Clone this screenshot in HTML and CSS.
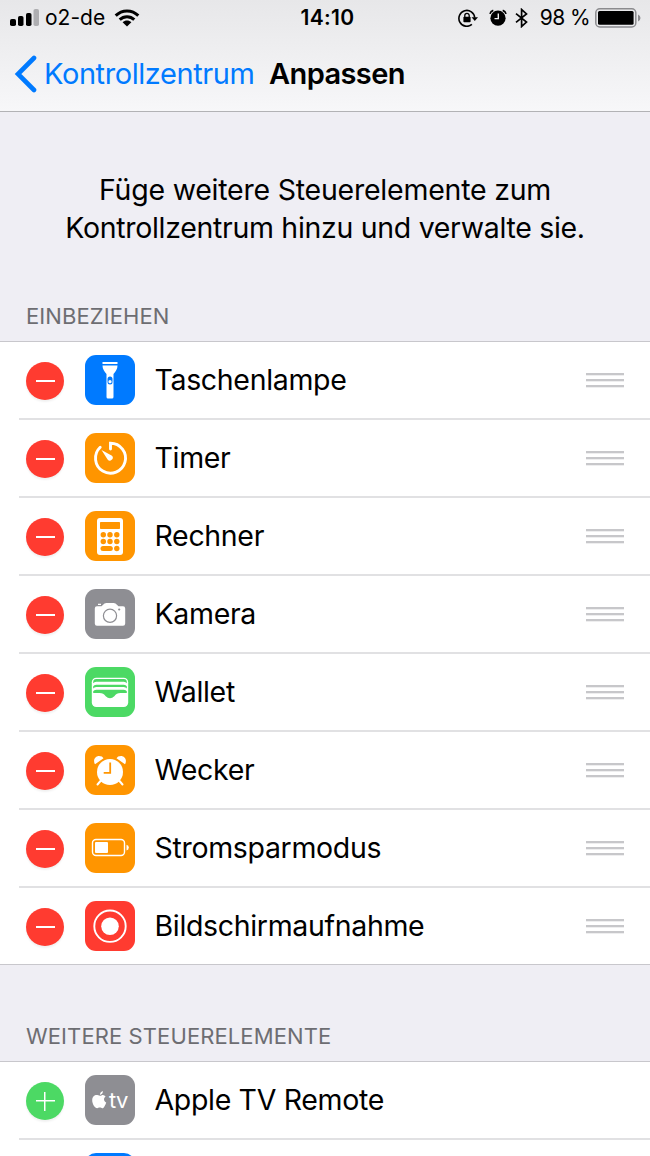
FILE: index.html
```
<!DOCTYPE html>
<html lang="de">
<head>
<meta charset="utf-8">
<title>Anpassen</title>
<link rel="stylesheet" href="styles.css">
</head>
<body>
<div class="screen">
  <header class="top">
    <div class="status">
      <div class="status-left">
        <svg class="signal" width="29" height="18" viewBox="0 0 29 18"><rect x="0" y="10" width="6" height="7" rx="1.8"/><rect x="8" y="7" width="5.5" height="10" rx="1.8"/><rect x="16" y="4" width="5.5" height="13" rx="1.8"/><rect x="23.5" y="0" width="5.5" height="17" rx="1.8" fill="#aeaeb1"/></svg>
        <span class="carrier">o2-de</span>
        <svg class="wifi" width="26" height="18" viewBox="0 0 26 18"><g fill="none" stroke="#000" stroke-width="3"><path d="M1.7 6.6C8 .3 18 .3 24.3 6.6"/><path d="M5.7 10.7C9.9 6.700 16.100 6.700 20.300 10.700"/></g><path d="M8.600 13.200C11.200 10.900 14.800 10.900 17.400 13.200L13 17.500Z"/></svg>
      </div>
      <span class="clock">14:10</span>
      <div class="status-right">
        <svg class="lock" width="20" height="18" viewBox="0 0 20 18"><path d="M13.900 15.400A7.900 7.900 0 1 1 16.700 8.800" fill="none" stroke="#000" stroke-width="1.600"/><path d="M13.500 8.200H20L16.800 12Z"/><rect x="5.400" y="7.800" width="7.200" height="5.500" rx=".8"/><path d="M6.800 8V6.500a2.200 2.200 0 0 1 4.400 0V8" fill="none" stroke="#000" stroke-width="1.300"/></svg>
        <svg class="alarm" width="18" height="18" viewBox="0 0 18 18"><circle cx="9" cy="9.200" r="7.600"/><path d="M1 4.900Q1.600 2.200 4.300 1.400M13.700 1.400Q16.400 2.200 17 4.900" fill="none" stroke="#000" stroke-width="1.700"/><path d="M9.300 4.500V9.600H5.500" fill="none" stroke="#f0f0f2" stroke-width="1.400"/></svg>
        <svg class="bluetooth" width="13" height="20" viewBox="0 0 13 20"><path d="M1 5.700L11.500 14.100 6.600 18.500V1.500L11.500 5.900 1 14.300" fill="none" stroke="#000" stroke-width="1.700"/></svg>
        <span class="percent">98 %</span>
        <svg class="battery" width="46" height="20" viewBox="0 0 46 20"><rect x=".8" y=".8" width="40" height="18.200" rx="4" fill="none" stroke="#8b8b8e" stroke-width="1.500"/><rect x="3" y="3" width="35.600" height="13.800" rx="1.500"/><path d="M43 6.500Q45.500 7.500 45.500 10T43 13.500Z" fill="#8b8b8e"/></svg>
      </div>
    </div>
    <nav class="nav">
      <svg class="back" width="23" height="38" viewBox="0 0 23 38"><path d="M20 3L4 19 20 35" fill="none" stroke="#007aff" stroke-width="4.600" stroke-linecap="round" stroke-linejoin="miter"/></svg>
      <a class="parent">Kontrollzentrum</a>
      <h1 class="title">Anpassen</h1>
    </nav>
  </header>
  <div class="intro"><p class="line-a">Füge weitere Steuerelemente zum</p><p class="line-b">Kontrollzentrum hinzu und verwalte sie.</p></div>
  <h2 class="heading">EINBEZIEHEN</h2>
  <ul class="list included">
    <li class="row"><i class="knob"></i>
      <svg class="tile blue" viewBox="0 0 50 50"><g fill="#fff"><rect x="17.500" y="7" width="15" height="2"/><path d="M17.500 10.500h15q0 4-4 8.500v23q0 1.500-1.500 1.500h-4q-1.500 0-1.500-1.500V19q-4-4.500-4-8.500z"/></g><rect x="22.500" y="21.500" width="5" height="8" rx="2.500" fill="#007aff"/><circle cx="25" cy="26.700" r="1.600" fill="#fff"/></svg>
      <span class="label">Taschenlampe</span><i class="grip"></i></li>
    <li class="row"><i class="knob"></i>
      <svg class="tile orange" viewBox="0 0 50 50"><path d="M15.200 14.300A15 15 0 1 0 25.500 10.200V16" fill="none" stroke="#fff" stroke-width="2.900" stroke-linecap="round"/><path d="M16.500 17L27 22.700A2.900 2.900 0 0 1 22.600 26.500Z" fill="#fff"/></svg>
      <span class="label">Timer</span><i class="grip"></i></li>
    <li class="row"><i class="knob"></i>
      <svg class="tile orange" viewBox="0 0 50 50"><rect x="12" y="7" width="26" height="37" rx="3" fill="#fff"/><g fill="#ff9500"><rect x="15" y="11" width="20" height="7" rx=".8"/><circle cx="18.300" cy="23.700" r="2.700"/><circle cx="25" cy="23.700" r="2.700"/><circle cx="31.800" cy="23.700" r="2.700"/><circle cx="18.300" cy="30.500" r="2.700"/><circle cx="25" cy="30.500" r="2.700"/><circle cx="31.800" cy="30.500" r="2.700"/><rect x="15.500" y="35" width="12.300" height="5" rx="2.500"/><circle cx="31.800" cy="37.500" r="2.700"/></g></svg>
      <span class="label">Rechner</span><i class="grip"></i></li>
    <li class="row"><i class="knob"></i>
      <svg class="tile gray" viewBox="0 0 50 50"><path d="M12 17.200h4.500l3-2.600q.7-.7 2-.7h7q1.300 0 2 .7l3 2.600H38q2.200 0 2.200 2.200v15.200q0 2.200-2.200 2.200H12q-2.200 0-2.200-2.200V19.400q0-2.200 2.200-2.200zM13 16v-1.300h3V16z" fill="#fff"/><circle cx="25" cy="26.800" r="6.600" fill="none" stroke="#8e8e93" stroke-width="1.200"/><circle cx="34.200" cy="20.500" r="1.100" fill="#8e8e93"/></svg>
      <span class="label">Kamera</span><i class="grip"></i></li>
    <li class="row"><i class="knob"></i>
      <svg class="tile green" viewBox="0 0 50 50"><rect x="6.800" y="10.700" width="36.400" height="29.300" rx="4.500" fill="#fff"/><g fill="#4cd964"><path d="M8.200 16.200V15q0-3 3-3h27.600q3 0 3 3v1.200Q40.800 14.700 38.800 14.700H11.200Q9.200 14.700 8.200 16.200z"/><path d="M8.200 21.500v-2.300Q9 17.700 11.200 17.700h27.600q2.200 0 3 1.500v2.300Q40.800 20 38.800 20H11.200Q9.200 20 8.200 21.500z"/><path d="M8.200 26v-1.800Q9 22.700 11.200 22.700h27.600q2.200 0 3 1.500V26h-6.300c-3 0-4.500 1-6.200 3.200q-2 2-4.300 2t-4.300-2C19 27 17.500 26 14.500 26z"/></g></svg>
      <span class="label">Wallet</span><i class="grip"></i></li>
    <li class="row"><i class="knob"></i>
      <svg class="tile orange" viewBox="0 0 50 50"><circle cx="25" cy="27" r="13" fill="#fff"/><path d="M25.200 17.500v10.300h-6.500" fill="none" stroke="#ff9500" stroke-width="1.800"/><path d="M15.500 36l-3 3.500M34.500 36l3 3.500" stroke="#fff" stroke-width="2" stroke-linecap="round"/><path d="M10 19.300C7.500 15 10.500 11 14 11q3.500 0 4.500 2.200zM40 19.300C42.500 15 39.500 11 36 11q-3.500 0-4.500 2.200z" fill="#fff"/></svg>
      <span class="label">Wecker</span><i class="grip"></i></li>
    <li class="row"><i class="knob"></i>
      <svg class="tile orange" viewBox="0 0 50 50"><rect x="7.500" y="16.500" width="32" height="16" rx="3.500" fill="none" stroke="#fff" stroke-width="1.400"/><rect x="10" y="19" width="13" height="11" rx="1" fill="#fff"/><path d="M41.500 21.800q2.300.4 2.300 2.800t-2.300 2.800z" fill="#fff"/></svg>
      <span class="label">Stromsparmodus</span><i class="grip"></i></li>
    <li class="row last"><i class="knob"></i>
      <svg class="tile red" viewBox="0 0 50 50"><circle cx="25" cy="25.200" r="15.700" fill="none" stroke="#fff" stroke-width="1.900"/><circle cx="25" cy="25.200" r="8.800" fill="#fff"/></svg>
      <span class="label">Bildschirmaufnahme</span><i class="grip"></i></li>
  </ul>
  <h2 class="heading more">WEITERE STEUERELEMENTE</h2>
  <ul class="list">
    <li class="row"><i class="knob add"></i>
      <svg class="tile gray" viewBox="0 0 50 50"><path d="M17.900 16q.2 2.900-2.900 4-.2-2.900 2.900-4zM15 20.800c1.200 0 1.700-.8 3-.8q1.500 0 2.600 1.500c-2.400 1.500-1.900 4.800.6 5.900-.8 2.300-2.200 5.800-3.800 5.800-1.100 0-1.300-.6-2.600-.6s-1.600.6-2.600.6C10 33.200 7.200 29 7.200 25.200c0-3 1.900-5.100 4.200-5.100 1.400 0 2.400.7 3.600.7z" fill="#fff"/><text class="tv" x="24" y="32.800">tv</text></svg>
      <span class="label">Apple TV Remote</span></li>
    <li class="row"><i class="knob add"></i><i class="tile blue"></i></li>
  </ul>
</div>
</body>
</html>
```
FILE: styles.css
```
* { box-sizing: border-box; }
body, h1, h2, p, ul { margin: 0; padding: 0; }
body { background: #efeef4; font-family: Inter, "Liberation Sans", sans-serif; color: #000; }
svg { display: block; flex: none; }
.screen { width: 650px; height: 1156px; overflow: hidden; }
.top { height: 112px; background: linear-gradient(#e7e7e9, #f7f7f9); border-bottom: 1px solid #b2b2b5; }
.status { display: grid; grid-template-columns: 1fr auto 1fr; height: 36px; padding: 0 10px; align-items: center; line-height: 36px; }
.status-left, .status-right { display: flex; align-items: center; }
.status-right { justify-content: flex-end; }
.carrier { font-size: 21px; margin-left: 6px; width: 59px; letter-spacing: 0; white-space: nowrap; }
.wifi { margin-left: 10px; }
.clock { font-size: 21px; font-weight: 600; letter-spacing: .3px; padding-left: 5px; }
.alarm { margin-left: 11px; }
.bluetooth { margin-left: 8px; }
.percent { font-size: 21px; font-weight: 400; margin: 0 5px 0 12px; letter-spacing: -.6px; white-space: nowrap; }
.battery { margin-right: -1px; }
.nav { display: flex; height: 75px; align-items: center; padding-left: 14px; line-height: 73px; }
.parent { font-size: 29px; color: #007aff; margin-left: 7px; width: 225px; letter-spacing: -.42px; }
.title { font-size: 29px; font-weight: 600; letter-spacing: -.6px; }
.intro { height: 183px; padding-top: 59px; text-align: center; font-size: 28.500px; line-height: 38px; white-space: nowrap; }
.line-a { letter-spacing: -.23px; }
.line-b { letter-spacing: -.31px; }
.heading { font-size: 22px; font-weight: 400; color: #6d6d72; height: 46px; padding-left: 26px; line-height: 43px; letter-spacing: .1px; white-space: nowrap; }
.list { list-style: none; background: #fff; border-top: 1px solid #c8c7cc; }
.row { display: flex; height: 78px; margin-left: 19px; padding: 13px 26px 0 7px; border-bottom: 2px solid #e1e1e3; }
.last { border-color: transparent; }
.included { height: 624px; border-bottom: 1px solid #c8c7cc; }
.more { height: 96px; line-height: 143px; }
.knob { flex: none; width: 38px; height: 38px; margin-top: 7px; border-radius: 50%; background: linear-gradient(#fff, #fff) center / 19px 2px no-repeat #ff3b30; box-shadow: 0 2px 2px rgba(0,0,0,.06); }
.add { background: linear-gradient(#fff, #fff) center / 19px 1.500px no-repeat, linear-gradient(#fff, #fff) center / 1.500px 19px no-repeat #4cd964; }
.tile { flex: none; width: 50px; height: 50px; margin-left: 21px; border-radius: 11px; }
.blue { background: #007aff; }
.orange { background: #ff9500; }
.gray { background: #8e8e93; }
.green { background: #4cd964; }
.red { background: #ff3b30; }
.label { font-size: 28.500px; line-height: 50px; margin-left: 19.500px; letter-spacing: -.33px; white-space: nowrap; }
.grip { width: 38px; height: 15px; margin: 18px 0 0 auto; background: repeating-linear-gradient(#c7c7ca 0 2px, #eeeeef 2px 3px, transparent 3px 6px); }
.tv { font-family: Inter, sans-serif; font-size: 22px; letter-spacing: -.6px; fill: #fff; }
```
